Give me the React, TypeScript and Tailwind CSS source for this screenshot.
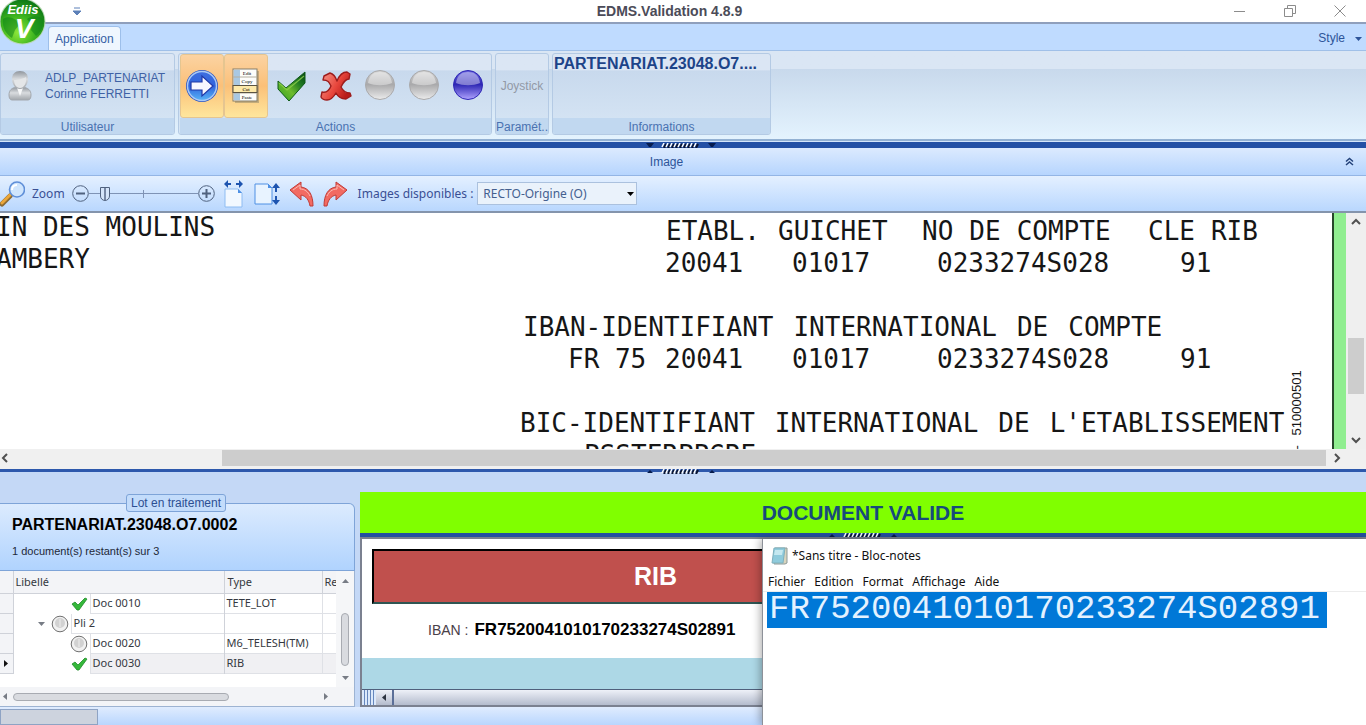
import type { ReactNode } from 'react';
import clsx from 'clsx';

interface DocRow {
  label: string;
  type: string;
  level: 1 | 2;
  status: 'ok' | 'pending';
  current?: boolean;
}

const IBAN = 'FR7520041010170233274S02891';

const ROWS: DocRow[] = [
  { label: 'Doc 0010', type: 'TETE_LOT', level: 2, status: 'ok' },
  { label: 'Pli 2', type: '', level: 1, status: 'pending' },
  { label: 'Doc 0020', type: 'M6_TELESH(TM)', level: 2, status: 'pending' },
  { label: 'Doc 0030', type: 'RIB', level: 2, status: 'ok', current: true },
];

const MENUS = ['Fichier', 'Edition', 'Format', 'Affichage', 'Aide'];

function Logo() {
  return (
    <svg className="absolute left-0 top-0 z-10" width="47" height="46" viewBox="0 0 47 46">
      <defs>
        <radialGradient id="globe" cx="40%" cy="75%" r="75%">
          <stop offset="0" stopColor="#8fe83a" />
          <stop offset="0.5" stopColor="#3db51f" />
          <stop offset="1" stopColor="#0d7a16" />
        </radialGradient>
      </defs>
      <circle cx="22.500" cy="21.500" r="23" fill="#b9d8b4" />
      <circle cx="22.500" cy="21.500" r="22" fill="url(#globe)" />
      <path d="M3 19c4-3 9-2 13 1l3 5-4 5-3 8C6 34 2 28 3 19z" fill="#0f8418" opacity="0.55" />
      <path d="M27 19c6-4 12-3 16 0 1 7-2 13-7 17l-5-6 1-5z" fill="#0f8418" opacity="0.55" />
      <text x="23" y="14" textAnchor="middle" fontSize="13" fontWeight="bold" fontStyle="italic" fill="#fff" fontFamily="Liberation Sans, sans-serif">Ediis</text>
      <text x="24" y="38" textAnchor="middle" fontSize="28" fontWeight="bold" fontStyle="italic" fill="#fff" fontFamily="Liberation Sans, sans-serif">V</text>
    </svg>
  );
}

function UserIcon() {
  return (
    <svg width="26" height="32" viewBox="0 0 26 32">
      <defs>
        <linearGradient id="user" x1="0" y1="0" x2="0" y2="1">
          <stop offset="0" stopColor="#8f959c" />
          <stop offset="0.45" stopColor="#d9dcdf" />
          <stop offset="1" stopColor="#a2a6ab" />
        </linearGradient>
      </defs>
      <path d="M2 25c0-5 3-7 7-8h7c5 1 8 3 8 8 0 3-1 5-3 5H5c-2 0-3-2-3-5z" fill="url(#user)" stroke="#a3a8ae" />
      <path d="M10 18l3 8 3-8z" fill="#f7f8f9" />
      <path d="M5 9c0-5 3-8 8-8s8 3 8 8-3 10-8 10S5 14 5 9z" fill="url(#user)" />
      <path d="M7 10c3 0 9-1 12-3 1 6-2 11-6 11s-6-4-6-8z" fill="#e4e6e8" />
    </svg>
  );
}

function ArrowIcon() {
  return (
    <svg width="34" height="34" viewBox="0 0 34 34">
      <defs>
        <linearGradient id="arrow" x1="0" y1="0" x2="0" y2="1">
          <stop offset="0" stopColor="#3f6ee0" />
          <stop offset="0.5" stopColor="#2f63dc" />
          <stop offset="1" stopColor="#58b4f7" />
        </linearGradient>
      </defs>
      <circle cx="17" cy="17" r="16" fill="#2c55c4" />
      <circle cx="17" cy="17" r="14.500" fill="url(#arrow)" stroke="#a9c8f5" strokeWidth="1.500" />
      <path d="M6 13h11V7l11 10-11 10v-6H6z" fill="#f8f6ff" stroke="#2038a8" strokeWidth="1.200" />
    </svg>
  );
}

function MenuListIcon() {
  return (
    <svg width="28" height="36" viewBox="0 0 28 36" fontFamily="Liberation Serif, serif" fontSize="5" textAnchor="middle">
      <rect x="3" y="3" width="24" height="32" fill="#8b8468" opacity="0.5" />
      <rect x="1" y="1" width="24" height="32" fill="#fdfdfb" stroke="#857f6b" />
      <rect x="2" y="2" width="6" height="30" fill="#a9c8e2" />
      <path d="M1 9h24M1 25h24" stroke="#b5b0a0" />
      <rect x="1" y="17.500" width="24" height="7" fill="#fde9a9" stroke="#5a5343" />
      <text x="15" y="7">Edit</text>
      <text x="15" y="15">Copy</text>
      <text x="14" y="23">Cut</text>
      <text x="15" y="31">Paste</text>
    </svg>
  );
}

function BigCheck() {
  return (
    <svg width="34" height="34" viewBox="0 0 34 34">
      <defs>
        <linearGradient id="check" x1="0" y1="1" x2="1" y2="0">
          <stop offset="0" stopColor="#2f9e23" />
          <stop offset="0.4" stopColor="#6dbb2c" />
          <stop offset="0.7" stopColor="#1f7a22" />
          <stop offset="1" stopColor="#06430f" />
        </linearGradient>
      </defs>
      <path d="M3 12l8 7L30 3v11L14 32 3 20z" fill="url(#check)" stroke="#0f5a18" />
      <path d="M4 14l8 7 17-14" fill="none" stroke="#8fd04c" strokeWidth="1.200" opacity="0.8" />
    </svg>
  );
}

function BigCross() {
  return (
    <svg width="32" height="32" viewBox="0 0 32 32">
      <defs>
        <linearGradient id="cross" x1="0" y1="0" x2="1" y2="0.500">
          <stop offset="0" stopColor="#f59a8e" />
          <stop offset="0.6" stopColor="#e8463c" />
          <stop offset="1" stopColor="#b81c1a" />
        </linearGradient>
      </defs>
      <path
        d="M4 6l6-3c4 1 6 5 7 8 2-5 5-9 10-9l3 2-1 5c-4 0-6 4-8 8 2 4 4 6 9 6l1 3-5 3c-5 0-8-2-10-6-3 5-5 7-9 7-3 0-5-1-6-3l1-5c4 1 7-1 9-6-2-4-3-6-8-6z"
        fill="url(#cross)"
        stroke="#9d1c1c"
        strokeWidth="1.400"
        strokeLinejoin="round"
      />
    </svg>
  );
}

function Ball({ id, top, mid, low }: { id: string; top: string; mid: string; low: string }) {
  return (
    <svg width="32" height="32" viewBox="0 0 32 32">
      <defs>
        <linearGradient id={id} x1="0" y1="0" x2="0" y2="1">
          <stop offset="0" stopColor={top} />
          <stop offset="0.48" stopColor={mid} />
          <stop offset="1" stopColor={low} />
        </linearGradient>
      </defs>
      <circle cx="16" cy="15" r="14.500" fill={`url(#${id})`} stroke={mid} />
      <path d="M4 13C5 5 10 2 16 2s11 3 12 11c-7 3-17 3-24 0z" fill="#fff" opacity="0.4" />
    </svg>
  );
}

function Magnifier() {
  return (
    <svg width="25" height="26" viewBox="0 0 25 26">
      <path d="M2 23l8-8" stroke="#8a6a35" strokeWidth="5" strokeLinecap="round" />
      <path d="M2 22l8-8" stroke="#eba73b" strokeWidth="3" strokeLinecap="round" />
      <circle cx="17" cy="8.500" r="7.500" fill="#cfe5fd" stroke="#5f8fd8" strokeWidth="1.600" />
      <path d="M12 9c0-3 2-5 5-5" stroke="#fff" strokeWidth="2" fill="none" />
    </svg>
  );
}

function FitWidthIcon() {
  return (
    <svg width="22" height="28" viewBox="0 0 22 28">
      <path d="M1 4l4-4v3h3v2H5v3zM20 4l-4-4v3h-3v2h3v3z" fill="#1d54b0" />
      <path d="M2 9h13l4 4v14H2z" fill="#f2f8ff" stroke="#8ebcf2" />
      <path d="M15 9v4h4z" fill="#4f90e4" />
    </svg>
  );
}

function FitHeightIcon() {
  return (
    <svg width="26" height="24" viewBox="0 0 26 24">
      <path d="M1 2h13l4 4v16H1z" fill="#e8f3ff" stroke="#4f90e4" />
      <path d="M14 2v4h4z" fill="#4f90e4" />
      <path d="M22 1l4 5h-3v4h-2V6h-3zM22 23l4-5h-3v-4h-2v4h-3z" fill="#1d54b0" />
    </svg>
  );
}

function TurnIcon({ flip }: { flip?: boolean }) {
  return (
    <svg width="25" height="26" viewBox="0 0 25 26" className={clsx(flip && '-scale-x-100')}>
      <path d="M1 9l11-8v5c8 1 12 8 12 19h-3c-1-6-4-10-9-11v5z" fill="#f26a62" stroke="#c03a36" />
      <path d="M4 9l7-5v4c5 0 8 3 10 7" fill="none" stroke="#fbb9b2" />
    </svg>
  );
}

function SmallCheck() {
  return (
    <svg width="17" height="14" viewBox="0 0 17 14">
      <path d="M1 7l3-2 3 3 7-7 2 1-8 11H6z" fill="#35b83a" stroke="#1f8a2a" strokeWidth="0.800" />
    </svg>
  );
}

function SmallBall() {
  return (
    <svg width="18" height="18" viewBox="0 0 18 18">
      <circle cx="9" cy="9" r="7.800" fill="#f1f1f1" stroke="#707070" />
      <circle cx="9" cy="8" r="5" fill="#d2d2d2" />
      <path d="M9 4v8" stroke="#eee" />
    </svg>
  );
}

function Grip({ up }: { up?: boolean }) {
  return (
    <svg width="70" height="5" viewBox="0 0 70 5">
      <path d={up ? 'M1 4h6L4 1zM63 4h6l-3-3z' : 'M0 0h8L5 4H3zM62 0h8l-3 4h-2z'} fill="#061b4d" />
      {Array.from({ length: 9 }, (_, i) => (
        <g key={i}>
          <path d={`M${16 + i * 4} 4l2-4`} stroke="#fff" strokeWidth="1.500" />
          <path d={`M${18 + i * 4} 5l2-4`} stroke="#0a1430" strokeWidth="2" />
        </g>
      ))}
    </svg>
  );
}

function Chevron({ dir }: { dir: 'up' | 'down' | 'left' | 'right' }) {
  const d = {
    up: 'M1 7l4-4 4 4',
    down: 'M1 3l4 4 4-4',
    left: 'M7 1L3 5l4 4',
    right: 'M3 1l4 4-4 4',
  }[dir];
  return (
    <svg width="10" height="10" viewBox="0 0 10 10">
      <path d={d} fill="none" stroke="#505050" strokeWidth="2" />
    </svg>
  );
}

function Triangle({ dir, color = '#777c85' }: { dir: 'up' | 'down' | 'left' | 'right'; color?: string }) {
  const d = { up: 'M0 6h7L3.500 2z', down: 'M0 2h7L3.500 6z', left: 'M5 0v7L1 3.500z', right: 'M2 0v7l4-3.500z' }[dir];
  return (
    <svg width="7" height="7" viewBox="0 0 7 7">
      <path d={d} fill={color} />
    </svg>
  );
}

function RibbonGroup({ title, className, children }: { title: string; className: string; children: ReactNode }) {
  return (
    <section className={clsx('flex flex-col overflow-hidden rounded-[3px] border border-[#b4cae4] bg-linear-to-b from-[#dbe6f4] from-20% via-[#c8d9ed] via-21% to-[#d7e6f5]', className)}>
      <div className="flex min-h-0 flex-1">{children}</div>
      <h2 className="h-4 overflow-hidden bg-[#c1d8f0] pt-px text-center text-xs leading-4 whitespace-nowrap text-[#4a72b0]">{title}</h2>
    </section>
  );
}

function RibbonButton({ label, active, children }: { label: string; active?: boolean; children: ReactNode }) {
  return (
    <button
      aria-label={label}
      className={clsx(
        'flex w-11 items-center justify-center rounded-[3px]',
        active && 'border border-[#e5c590] bg-linear-to-b from-[#fbd3a2] via-[#fbc078] via-50% to-[#fee69c]'
      )}
    >
      {children}
    </button>
  );
}

function TitleBar() {
  return (
    <header className="flex h-6 shrink-0 items-center border-b-2 border-[#8f9fbc] bg-white">
      <div className="flex flex-1 pl-[73px]">
        <button aria-label="Personnaliser">
          <svg width="8" height="9" viewBox="0 0 8 9">
            <path d="M1 1h6M0 4h8L4 8z" stroke="#5d80b8" fill="#5d80b8" />
          </svg>
        </button>
      </div>
      <h1 className="pr-20 text-sm font-bold text-[#4b4b58]">EDMS.Validation 4.8.9</h1>
      <div className="flex flex-1 justify-end gap-[38px] pr-5 text-[#8c8c8c]">
        <button aria-label="Réduire">
          <svg width="12" height="12" viewBox="0 0 12 12" fill="none" stroke="currentColor"><path d="M0 6.500h11" /></svg>
        </button>
        <button aria-label="Restaurer">
          <svg width="12" height="12" viewBox="0 0 12 12" fill="none" stroke="currentColor"><path d="M.5 3.500h8v8h-8zM3.500 3V.5h8v8H9" /></svg>
        </button>
        <button aria-label="Fermer">
          <svg width="12" height="12" viewBox="0 0 12 12" fill="none" stroke="currentColor"><path d="M.5.500l11 11M11.500.500l-11 11" /></svg>
        </button>
      </div>
    </header>
  );
}

function Ribbon() {
  return (
    <>
      <nav className="flex h-[26px] shrink-0 items-end justify-between bg-[#bfdbff] pl-12 pr-1 text-xs text-[#2d5499]">
        <button className="h-6 rounded-t border border-b-0 border-[#9dbfea] bg-[#eff6fe] px-1.5 text-[#3560a5]">Application</button>
        <button className="flex h-6 items-center gap-2.5">
          Style
          <Triangle dir="down" color="#2d5499" />
        </button>
      </nav>
      <div className="flex h-[91px] shrink-0 gap-[3px] border-b-2 border-t border-t-[#a0c0e8] border-b-[#93b1d3] bg-linear-to-b from-[#dae6f4] from-20% via-[#c8d9ec] via-21% to-[#e4f3fe] pb-1 pt-0.5">
        <RibbonGroup title="Utilisateur" className="w-[175px]">
          <div className="flex items-center gap-3 pl-1.5">
            <UserIcon />
            <p className="text-xs leading-4 text-[#3f62a5]">
              ADLP_PARTENARIAT
              <br />
              Corinne FERRETTI
            </p>
          </div>
        </RibbonGroup>
        <RibbonGroup title="Actions" className="w-[314px] pl-px">
          <div className="mr-0.5 flex">
            <RibbonButton label="Suivant" active><ArrowIcon /></RibbonButton>
            <RibbonButton label="Menu" active><MenuListIcon /></RibbonButton>
          </div>
          <RibbonButton label="Valider"><BigCheck /></RibbonButton>
          <RibbonButton label="Rejeter"><BigCross /></RibbonButton>
          <RibbonButton label="État 1"><Ball id="b1" top="#d5d5d5" mid="#a9a9ab" low="#ececec" /></RibbonButton>
          <RibbonButton label="État 2"><Ball id="b2" top="#d5d5d5" mid="#a9a9ab" low="#ececec" /></RibbonButton>
          <RibbonButton label="État 3"><Ball id="b3" top="#6a66e0" mid="#2e27b4" low="#b0a4ff" /></RibbonButton>
        </RibbonGroup>
        <RibbonGroup title="Paramét.." className="w-[54px]">
          <button disabled className="w-full text-xs text-[#9299a6]">Joystick</button>
        </RibbonGroup>
        <RibbonGroup title="Informations" className="w-[219px]">
          <p className="min-w-0 truncate pl-px text-base leading-5 font-bold text-[#1d4489]">PARTENARIAT.23048.O7....</p>
        </RibbonGroup>
      </div>
    </>
  );
}

function ImageToolbar() {
  return (
    <>
      <div className="flex h-7 shrink-0 items-center border-b border-[#93b5e5] bg-linear-to-b from-[#dceafe] to-[#b6d5fe] pr-3">
        <h2 className="flex-1 pr-3 text-center text-xs text-[#2d5499]">Image</h2>
        <button aria-label="Replier" className="text-[#23427a]">
          <svg width="9" height="9" viewBox="0 0 9 9" fill="none" stroke="currentColor" strokeWidth="1.500">
            <path d="M1 4.500l3.500-3 3.500 3M1 8l3.500-3L8 8" />
          </svg>
        </button>
      </div>
      <div className="flex h-[37px] shrink-0 items-center border-b-2 border-[#8494ac] bg-linear-to-b from-[#e4f0ff] to-[#b9d7fe] font-['Noto_Sans',sans-serif] text-xs text-[#3a4f94]">
        <Magnifier />
        <label htmlFor="zoom" className="mx-[7px]">Zoom</label>
        <div className="flex items-center text-[#50627f]">
          <button aria-label="Zoom arrière">
            <svg width="17" height="17" viewBox="0 0 17 17" fill="none" stroke="currentColor"><circle cx="8.500" cy="8.500" r="7.800" /><path d="M4 8.500h9" strokeWidth="2" /></svg>
          </button>
          <div className="relative flex items-center">
            <input
              id="zoom"
              type="range"
              defaultValue={12}
              className="h-4 w-[109px] appearance-none bg-[linear-gradient(#7f93b5,#7f93b5)] bg-size-[100%_1px] bg-center bg-no-repeat [&::-webkit-slider-thumb]:h-3.5 [&::-webkit-slider-thumb]:w-2.5 [&::-webkit-slider-thumb]:appearance-none [&::-webkit-slider-thumb]:rounded-b-[5px] [&::-webkit-slider-thumb]:border [&::-webkit-slider-thumb]:border-[#50627f] [&::-webkit-slider-thumb]:bg-[linear-gradient(90deg,#d5e5fa_3px,#7788a5_3px,#7788a5_5px,#d5e5fa_5px)]"
            />
            <span className="absolute left-1/2 h-2 w-px bg-[#7f93b5]" />
          </div>
          <button aria-label="Zoom avant">
            <svg width="17" height="17" viewBox="0 0 17 17" fill="none" stroke="currentColor"><circle cx="8.500" cy="8.500" r="7.800" /><path d="M4 8.500h9M8.500 4v9" strokeWidth="2" /></svg>
          </button>
        </div>
        <div className="ml-2 mr-2.5 flex items-center gap-[9px]">
          <button aria-label="Ajuster à la largeur"><FitWidthIcon /></button>
          <button aria-label="Ajuster à la hauteur"><FitHeightIcon /></button>
          <button aria-label="Rotation à gauche"><TurnIcon /></button>
          <button aria-label="Rotation à droite"><TurnIcon flip /></button>
        </div>
        <label htmlFor="images">Images disponibles :</label>
        <div className="relative ml-1">
          <select id="images" className="h-[23px] w-40 appearance-none border border-[#abc1de] bg-[#eaf2fb] pl-[5px] pr-4 text-[#44608f]">
            <option>RECTO-Origine (O)</option>
          </select>
          <span className="pointer-events-none absolute right-[3px] top-2">
            <Triangle dir="down" color="#000" />
          </span>
        </div>
      </div>
    </>
  );
}

function ScannedPage() {
  return (
    <div className="relative flex min-w-0 flex-1 overflow-hidden bg-white font-['DejaVu_Sans_Mono',monospace] text-[26px] leading-8 whitespace-nowrap text-[#161616]">
      <div className="-mt-0.5 -ml-1 w-[524px] shrink-0">
        <p>IN DES MOULINS</p>
        <p>AMBERY</p>
      </div>
      <div className="pt-0.5">
        <div className="grid grid-cols-[112px_144px_226px_auto] pl-[146px]">
          <span>ETABL.</span>
          <span>GUICHET</span>
          <span className="flex gap-4"><span>NO</span><span>DE</span><span>COMPTE</span></span>
          <span className="flex gap-4"><span>CLE</span><span>RIB</span></span>
        </div>
        <div className="grid grid-cols-[127px_145px_243px_auto] pl-[145px]">
          <span>20041</span>
          <span>01017</span>
          <span>0233274S028</span>
          <span>91</span>
        </div>
        <p className="mt-8 flex gap-5 pl-[3px]"><span>IBAN-IDENTIFIANT</span><span>INTERNATIONAL</span><span>DE</span><span>COMPTE</span></p>
        <div className="grid grid-cols-[97px_127px_145px_243px_auto] pl-12">
          <span>FR 75</span>
          <span>20041</span>
          <span>01017</span>
          <span>0233274S028</span>
          <span>91</span>
        </div>
        <p className="mt-8 flex gap-5"><span>BIC-IDENTIFIANT</span><span>INTERNATIONAL</span><span>DE</span><span>L'ETABLISSEMENT</span></p>
        <p className="pl-16">PSSTFRPPGRE</p>
      </div>
      <p className="absolute top-[157px] right-[41px] flex rotate-180 gap-2.5 font-['Liberation_Sans',sans-serif] text-[13px] leading-4 [writing-mode:vertical-rl]"><span>-</span><span>510000501</span></p>
      <div className="absolute inset-y-0 right-0 w-3.5 border-l-2 border-[#26472a] bg-[#90ee90]" />
    </div>
  );
}

function Viewer() {
  return (
    <div className="flex min-h-0 flex-1 flex-col bg-[#f0f0f0]">
      <div className="flex min-h-0 flex-1">
        <ScannedPage />
        <div className="flex w-5 flex-col items-center justify-between bg-[#efefef] py-1">
          <Chevron dir="up" />
          <div className="flex w-full flex-1 flex-col items-center pt-[111px]">
            <div className="h-14 w-4 bg-[#cdcdcd]" />
          </div>
          <Chevron dir="down" />
        </div>
      </div>
      <div className="flex h-[18px] shrink-0 items-center pr-6">
        <div className="w-[222px] shrink-0"><Chevron dir="left" /></div>
        <div className="mr-1.5 h-4 flex-1 bg-[#cdcdcd]" />
        <Chevron dir="right" />
      </div>
    </div>
  );
}

function LotPanel() {
  return (
    <aside className="flex w-[355px] shrink-0 flex-col pt-[31px]">
      <fieldset className="relative h-[68px] rounded-tr-md border border-l-0 border-[#7ea4d8] bg-linear-to-b from-[#dcebfe] to-[#b0d3fe] pt-[11px] pl-3">
        <legend className="absolute -top-2.5 left-[126px] rounded-[3px] border border-[#7ea4d8] bg-[#c3dcfb] px-1 text-xs leading-4 text-[#2d4f92]">Lot en traitement</legend>
        <p className="text-base leading-5 font-bold text-black">PARTENARIAT.23048.O7.0002</p>
        <p className="mt-2 text-[11px] leading-4 text-[#222838]">1 document(s) restant(s) sur 3</p>
      </fieldset>
      <div className="flex flex-1 flex-col border-r border-b border-[#9db3d2] bg-[#f3f4f7] font-['Noto_Sans',sans-serif] text-[11px] text-[#343840]">
        <div className="flex flex-1">
          <div className="min-w-0 flex-1 overflow-hidden bg-white">
            <table className="w-[352px] table-fixed border-collapse">
              <colgroup>
                <col className="w-[13px]" />
                <col className="w-[211px]" />
                <col className="w-[98px]" />
                <col />
              </colgroup>
              <thead>
                <tr className="h-[22px] bg-[#f3f4f7] text-left">
                  <th className="border-r border-b border-[#cfd2d9]" />
                  <th className="border-r border-b border-[#cfd2d9] p-0 pl-0.5 font-normal">Libellé</th>
                  <th className="border-r border-b border-[#cfd2d9] p-0 pl-[3px] font-normal">Type</th>
                  <th className="border-b border-[#cfd2d9] p-0 pl-0.5 font-normal">Re</th>
                </tr>
              </thead>
              <tbody>
                {ROWS.map((row) => (
                  <tr key={row.label} className="h-5">
                    <td className="border-r border-b border-[#cfd2d9] bg-[#f3f4f7] p-0 pl-0.5">
                      {row.current && <Triangle dir="right" color="#111" />}
                    </td>
                    <td className="border-r border-[#cfd2d9] p-0">
                      <div className="flex h-5 items-center">
                        <span className={clsx('flex shrink-0 items-center justify-end gap-1.5 pr-0.5', row.level === 2 ? 'w-[76px]' : 'w-[57px]')}>
                          {row.level === 1 && <Triangle dir="down" />}
                          {row.status === 'ok' ? <SmallCheck /> : <SmallBall />}
                        </span>
                        <span className={clsx('h-full flex-1 border-b border-l border-[#dfe1e6] pl-0.5 leading-[18px]', row.current && 'bg-[#f0f0f3]')}>{row.label}</span>
                      </div>
                    </td>
                    <td className={clsx('border-r border-b border-[#dfe1e6] p-0 pl-0.5', row.current && 'bg-[#f0f0f3]')}>{row.type}</td>
                    <td className={clsx('border-b border-[#dfe1e6] p-0', row.current && 'bg-[#f0f0f3]')} />
                  </tr>
                ))}
              </tbody>
            </table>
          </div>
          <div className="flex w-[18px] flex-col items-center justify-between bg-[#f5f6f8] py-1.5">
            <Triangle dir="up" />
            <div className="flex flex-1 items-end pb-2">
              <div className="h-[53px] w-2 rounded border border-[#a8abb2] bg-[#d9dbe0]" />
            </div>
            <Triangle dir="down" />
          </div>
        </div>
        <div className="flex h-[19px] items-center justify-between pr-[25px] pl-0.5">
          <Triangle dir="left" />
          <div className="ml-1 mr-auto h-2 w-[216px] rounded border border-[#a8abb2] bg-[#d9dbe0]" />
          <Triangle dir="right" />
        </div>
      </div>
    </aside>
  );
}

function FormPanel() {
  return (
    <main className="ml-[5px] flex min-w-0 flex-1 flex-col pt-5">
      <div className="flex h-[41px] items-center justify-center bg-[#80ff00]">
        <h2 className="text-[21px] font-bold text-[#174a7c]">DOCUMENT VALIDE</h2>
      </div>
      <div className="flex h-1 justify-center bg-[#2450a0]"><Grip up /></div>
      <div className="flex flex-1 flex-col border-2 border-r-0 border-[#7b8190] bg-white">
        <div className="mt-2.5 ml-2.5 flex h-[55px] w-[565px] items-center justify-center border-t-2 border-l-2 border-b-2 border-black border-b-[#2f5553] bg-[#c0504d]">
          <h3 className="text-[25px] font-bold text-white">RIB</h3>
        </div>
        <p className="mt-3.5 flex items-center gap-1.5 pl-[66px]">
          <span className="text-sm text-[#4a4048]">IBAN :</span>
          <span className="text-[17px] leading-6 font-bold text-black">{IBAN}</span>
        </p>
        <div className="mt-auto h-[31px] bg-[#add8e6]" />
        <div className="flex h-4 border-t border-[#50607c] bg-linear-to-b from-[#eef1f8] to-[#b4bccd]">
          <div className="flex w-3.5 justify-evenly bg-[#dbe9fb]">
            <span className="w-1 border-x border-[#6687bd]" />
            <span className="w-1 border-x border-[#6687bd]" />
          </div>
          <button aria-label="Précédent" className="flex w-[18px] items-center justify-center border-r-2 border-[#5b6f98]">
            <Triangle dir="left" color="#2c3340" />
          </button>
        </div>
      </div>
    </main>
  );
}

function Notepad() {
  return (
    <section className="absolute right-0 bottom-0 left-[762px] z-20 h-[186px] border-l border-[#8d9199] bg-white font-['Noto_Sans',sans-serif] text-xs text-[#111] shadow-[-2px_0_8px_rgba(0,0,0,0.3)]">
      <div className="flex h-[34px] items-center gap-1 pl-2">
        <svg width="17" height="18" viewBox="0 0 17 18">
          <path d="M4 1h12v15l-2 1H3z" fill="#d8d4bd" stroke="#8d9a99" />
          <path d="M3 1h11l-2 15H1z" fill="#8fcbdc" stroke="#7fb0bd" />
          <path d="M4 3h8l-1 5H3z" fill="#c5e8f0" />
        </svg>
        <h2>*Sans titre - Bloc-notes</h2>
      </div>
      <nav className="flex h-[19px] items-center gap-[9px] border-b border-[#ececec] pl-[5px]">
        {MENUS.map((m) => (
          <button key={m}>{m}</button>
        ))}
      </nav>
      <input
        aria-label="Texte"
        readOnly
        value={IBAN}
        className="ml-1 block h-9 w-[560px] bg-[#0078d7] pl-0.5 font-['Liberation_Mono',monospace] text-[34px] text-[#e4f2ff]"
      />
    </section>
  );
}

export default function App() {
  return (
    <div className="relative flex h-screen flex-col overflow-hidden bg-[#c4d8f6] font-['Liberation_Sans',Arial,sans-serif]">
      <Logo />
      <TitleBar />
      <Ribbon />
      <div className="flex h-[7px] shrink-0 items-center justify-center border-t border-[#d5e6fa] bg-[#2350a5] pr-1"><Grip /></div>
      <ImageToolbar />
      <Viewer />
      <div className="flex h-[5px] shrink-0 justify-center border-t-2 border-[#f0f0f0] bg-[#2d58ac] pr-1"><Grip up /></div>
      <div className="flex h-[235px] shrink-0">
        <LotPanel />
        <FormPanel />
      </div>
      <footer className="flex h-[18px] shrink-0 bg-linear-to-b from-[#e0ecfe] to-[#b9d6fe]">
        <div className="mt-0.5 w-[98px] border border-[#8ea3c4] bg-[#cdd3de]" />
      </footer>
      <Notepad />
    </div>
  );
}
